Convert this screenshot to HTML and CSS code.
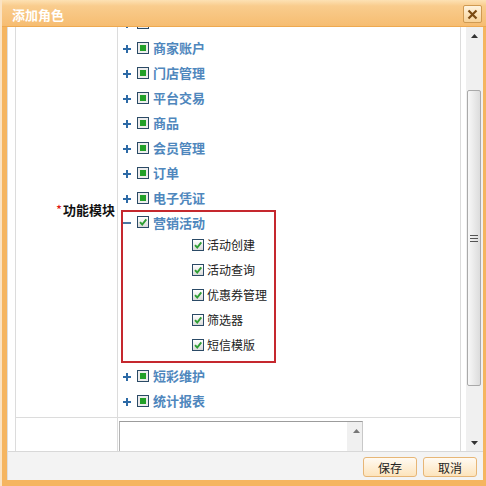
FILE: index.html
```html
<!DOCTYPE html>
<html lang="zh-CN">
<head>
<meta charset="utf-8">
<title>添加角色</title>
<link rel="stylesheet" href="styles.css">
</head>
<body>
<div class="dialog">
  <div class="titlebar">
    <span class="title">添加角色</span>
    <button class="close" aria-label="关闭"><svg width="11" height="11" viewBox="0 0 11 11"><path d="M1.5 1.5L9.5 9.5M9.5 1.5L1.5 9.5" stroke="#7b4a12" stroke-width="2.2" fill="none"/></svg></button>
  </div>
  <div class="body">
    <div class="viewport">
      <div class="content">
        <div class="form">
          <div class="cell label"><span class="req">*</span>功能模块</div>
          <div class="cell field">
            <ul class="tree">
              <li><div class="row"><span class="tg"><svg width="8" height="8" viewBox="0 0 8 8"><path d="M0 4h8M4 0v8" stroke="#2d6aa6" stroke-width="2"/></svg></span><span class="cb part"></span></div></li>
              <li><div class="row"><span class="tg"><svg width="8" height="8" viewBox="0 0 8 8"><path d="M0 4h8M4 0v8" stroke="#2d6aa6" stroke-width="2"/></svg></span><span class="cb part"></span><span class="txt">商家账户</span></div></li>
              <li><div class="row"><span class="tg"><svg width="8" height="8" viewBox="0 0 8 8"><path d="M0 4h8M4 0v8" stroke="#2d6aa6" stroke-width="2"/></svg></span><span class="cb part"></span><span class="txt">门店管理</span></div></li>
              <li><div class="row"><span class="tg"><svg width="8" height="8" viewBox="0 0 8 8"><path d="M0 4h8M4 0v8" stroke="#2d6aa6" stroke-width="2"/></svg></span><span class="cb part"></span><span class="txt">平台交易</span></div></li>
              <li><div class="row"><span class="tg"><svg width="8" height="8" viewBox="0 0 8 8"><path d="M0 4h8M4 0v8" stroke="#2d6aa6" stroke-width="2"/></svg></span><span class="cb part"></span><span class="txt">商品</span></div></li>
              <li><div class="row"><span class="tg"><svg width="8" height="8" viewBox="0 0 8 8"><path d="M0 4h8M4 0v8" stroke="#2d6aa6" stroke-width="2"/></svg></span><span class="cb part"></span><span class="txt">会员管理</span></div></li>
              <li><div class="row"><span class="tg"><svg width="8" height="8" viewBox="0 0 8 8"><path d="M0 4h8M4 0v8" stroke="#2d6aa6" stroke-width="2"/></svg></span><span class="cb part"></span><span class="txt">订单</span></div></li>
              <li><div class="row"><span class="tg"><svg width="8" height="8" viewBox="0 0 8 8"><path d="M0 4h8M4 0v8" stroke="#2d6aa6" stroke-width="2"/></svg></span><span class="cb part"></span><span class="txt">电子凭证</span></div></li>
              <li class="open">
                <div class="row"><span class="tg"><svg width="8" height="8" viewBox="0 0 8 8"><path d="M0 4h8" stroke="#4a76a0" stroke-width="2"/></svg></span><span class="cb checked"><svg width="10" height="10" viewBox="0 0 10 10"><path d="M2 5.2l2.2 2.3L8.3 2.4" stroke="#2f9e34" stroke-width="1.9" fill="none"/></svg></span><span class="txt">营销活动</span></div>
                <ul class="sub">
                  <li><div class="row"><span class="cb checked"><svg width="10" height="10" viewBox="0 0 10 10"><path d="M2 5.2l2.2 2.3L8.3 2.4" stroke="#2f9e34" stroke-width="1.9" fill="none"/></svg></span><span class="txt">活动创建</span></div></li>
                  <li><div class="row"><span class="cb checked"><svg width="10" height="10" viewBox="0 0 10 10"><path d="M2 5.2l2.2 2.3L8.3 2.4" stroke="#2f9e34" stroke-width="1.9" fill="none"/></svg></span><span class="txt">活动查询</span></div></li>
                  <li><div class="row"><span class="cb checked"><svg width="10" height="10" viewBox="0 0 10 10"><path d="M2 5.2l2.2 2.3L8.3 2.4" stroke="#2f9e34" stroke-width="1.9" fill="none"/></svg></span><span class="txt">优惠券管理</span></div></li>
                  <li><div class="row"><span class="cb checked"><svg width="10" height="10" viewBox="0 0 10 10"><path d="M2 5.2l2.2 2.3L8.3 2.4" stroke="#2f9e34" stroke-width="1.9" fill="none"/></svg></span><span class="txt">筛选器</span></div></li>
                  <li><div class="row"><span class="cb checked"><svg width="10" height="10" viewBox="0 0 10 10"><path d="M2 5.2l2.2 2.3L8.3 2.4" stroke="#2f9e34" stroke-width="1.9" fill="none"/></svg></span><span class="txt">短信模版</span></div></li>
                </ul>
              </li>
              <li><div class="row"><span class="tg"><svg width="8" height="8" viewBox="0 0 8 8"><path d="M0 4h8M4 0v8" stroke="#2d6aa6" stroke-width="2"/></svg></span><span class="cb part"></span><span class="txt">短彩维护</span></div></li>
              <li><div class="row"><span class="tg"><svg width="8" height="8" viewBox="0 0 8 8"><path d="M0 4h8M4 0v8" stroke="#2d6aa6" stroke-width="2"/></svg></span><span class="cb part"></span><span class="txt">统计报表</span></div></li>
            </ul>
          </div>
          <div class="cell"></div>
          <div class="cell field-ta">
            <div class="ta">
              <textarea aria-label="备注"></textarea>
              <div class="ta-scroll"><div class="ta-up"><svg width="7" height="4" viewBox="0 0 7 4"><path d="M0 4L3.5 0L7 4z" fill="#777"/></svg></div></div>
            </div>
          </div>
        </div>
      </div>
      <div class="vscroll">
        <div class="sb-btn"><svg width="7" height="4" viewBox="0 0 7 4"><path d="M0 4L3.5 0L7 4z" fill="#333"/></svg></div>
        <div class="sb-track">
          <div class="thumb"><svg width="8" height="7" viewBox="0 0 8 7"><path d="M0 0.5h8M0 3.5h8M0 6.5h8" stroke="#555" stroke-width="1"/></svg></div>
        </div>
        <div class="sb-btn"><svg width="7" height="4" viewBox="0 0 7 4"><path d="M0 0L3.5 4L7 0z" fill="#333"/></svg></div>
      </div>
    </div>
    <div class="footer">
      <button class="btn">保存</button>
      <button class="btn">取消</button>
    </div>
  </div>
</div>
</body>
</html>
```
FILE: styles.css
```css
* { box-sizing: border-box; }
html, body { margin: 0; padding: 0; }
body {
  width: 486px;
  height: 486px;
  overflow: hidden;
  font-family: "Noto Sans CJK SC", "Noto Sans", sans-serif;
  font-size: 12px;
  color: #333;
  background: #fff;
}
.dialog {
  width: 486px;
  height: 486px;
  display: flex;
  flex-direction: column;
  background: #f5b560;
  border-left: 2px solid #fbe3c3;
}
.titlebar {
  height: 27px;
  flex: none;
  display: flex;
  align-items: center;
  justify-content: space-between;
  padding: 0 4px 0 10px;
  background: linear-gradient(#fde1b4, #f9cc8d 22%, #f6bc70);
  box-shadow: inset 0 -1px 0 #eea950;
}
.title {
  color: #fff;
  font-weight: bold;
  font-size: 13px;
  padding-top: 2px;
}
.close {
  width: 19px;
  height: 18px;
  padding: 0;
  margin-top: 1px;
  border: 1px solid #cf9a52;
  border-radius: 2px;
  background: linear-gradient(#fff3de, #f8d298);
  display: flex;
  align-items: center;
  justify-content: center;
}
.body {
  flex: 1;
  margin: 0 3px 6px 5px;
  border-left: 1px solid #dedede;
  background: #fff;
  display: flex;
  flex-direction: column;
  min-height: 0;
}
.viewport {
  height: 424px;
  flex: none;
  display: flex;
}
.content {
  flex: 1;
  overflow: hidden;
}
.form {
  width: 446px;
  margin: -18px 0 0 7px;
  display: grid;
  grid-template-columns: 102px 1fr;
  border-left: 1px solid #dcdcdc;
  border-top: 1px solid #dcdcdc;
}
.cell {
  border-right: 1px solid #dcdcdc;
  border-bottom: 1px solid #dcdcdc;
}
.label {
  display: flex;
  align-items: center;
  justify-content: flex-end;
  padding: 0 2px 8px 0;
  font-weight: bold;
  font-size: 13px;
  color: #111;
}
.req {
  color: #e01010;
  font-weight: normal;
  margin-right: 1px;
}
.tree, .sub {
  list-style: none;
  margin: 0;
  padding: 0;
}
.tree { padding-bottom: 4px; }
.row {
  height: 25px;
  display: flex;
  align-items: center;
  padding-left: 5px;
}
.tg {
  width: 8px;
  height: 8px;
  margin: 2px 6px 0 0;
  display: flex;
  flex: none;
}
.cb {
  width: 12px;
  height: 12px;
  margin-right: 4px;
  flex: none;
  border: 1px solid #2b4a66;
  display: flex;
  align-items: center;
  justify-content: center;
}
.cb.part {
  background: #22a028;
  box-shadow: inset 0 0 0 2px #ececec;
}
.cb.checked {
  background: linear-gradient(#ffffff, #dadada);
}
.txt {
  font-weight: bold;
  font-size: 13px;
  color: #4f87bd;
  white-space: nowrap;
}
.open {
  margin-left: 3px;
  width: 155px;
  border: 2px solid #c5282e;
  padding-bottom: 4px;
}
.open > .row {
  height: 20px;
  padding-left: 0;
}
.sub .row { padding-left: 69px; }
.sub .cb { margin-right: 3px; }
.sub .txt {
  font-weight: normal;
  font-size: 12px;
  color: #222;
}
.field-ta { padding: 3px 0 0 1px; }
.ta {
  width: 244px;
  height: 48px;
  display: flex;
  border: 1px solid #c8c8c8;
  border-top-color: #9c9c9c;
  border-left-color: #b4b4b4;
}
.ta textarea {
  flex: 1;
  border: 0;
  resize: none;
  outline: none;
  padding: 2px;
  font: inherit;
  overflow: hidden;
}
.ta-scroll {
  width: 15px;
  background: #f0f0f0;
  display: flex;
  flex-direction: column;
}
.ta-up {
  height: 17px;
  display: flex;
  align-items: center;
  justify-content: center;
  padding-left: 3px;
}
.vscroll {
  width: 17px;
  flex: none;
  display: flex;
  flex-direction: column;
  background: #f0f0f0;
}
.sb-btn {
  height: 17px;
  flex: none;
  display: flex;
  align-items: center;
  justify-content: center;
}
.sb-track {
  flex: 1;
  padding: 46px 2px 0 1px;
}
.thumb {
  height: 296px;
  border: 1px solid #a9a9a9;
  border-radius: 2px;
  background: linear-gradient(to right, #f8f8f8, #dcdcdc);
  display: flex;
  align-items: center;
  justify-content: center;
}
.footer {
  height: 29px;
  flex: none;
  border-top: 1px solid #d8d8d8;
  background: #f3f3f3;
  display: flex;
  justify-content: flex-end;
  align-items: flex-start;
  gap: 6px;
  padding: 5px 6px 0 0;
}
.btn {
  width: 54px;
  height: 20px;
  padding: 0;
  border: 1px solid #e7b676;
  border-radius: 3px;
  background: linear-gradient(#fffaf2, #fde4bc);
  font-family: inherit;
  font-size: 12px;
  color: #222;
}
```
